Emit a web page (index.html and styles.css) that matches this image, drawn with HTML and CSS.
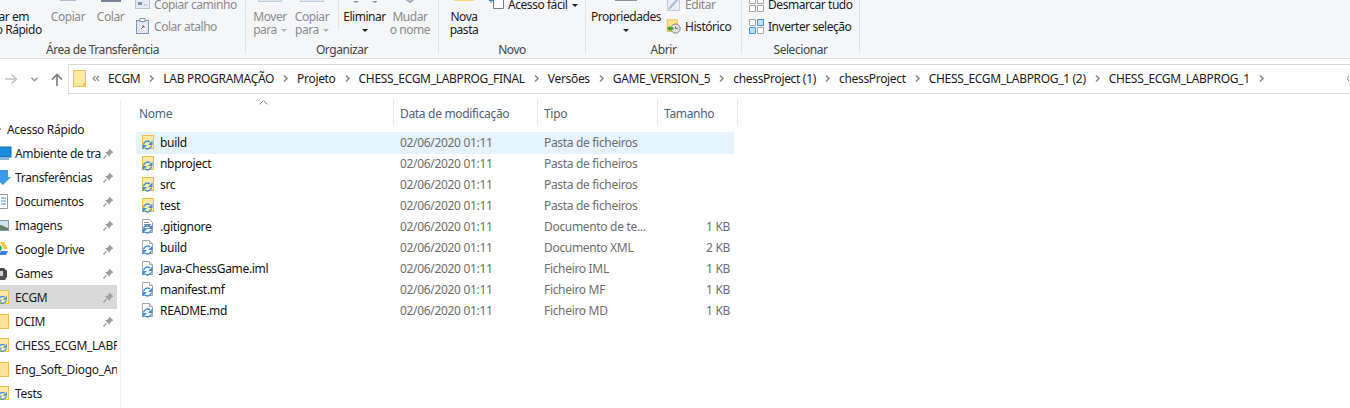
FILE: index.html
```html
<!DOCTYPE html>
<html lang="pt">
<head>
  <meta charset="UTF-8">
  <title>CHESS_ECGM_LABPROG_1</title>
  <link rel="stylesheet" href="styles.css">
</head>
<body>
<svg class="defs" width="0" height="0">
  <symbol id="sync" viewBox="0 0 18 18">
    <g fill="none" stroke="#3a8de0" stroke-width="1.400">
      <path d="M4.500 10.500a4 4 0 0 1 6.500-2.500"/>
      <path d="M12.500 11.500a4 4 0 0 1-6.500 2.500"/>
    </g>
    <path d="M13.500 6.500v4.500h-4.500zM3.500 15.500v-4.500h4.500z" fill="#3a8de0"/>
  </symbol>
  <symbol id="folder" viewBox="0 0 18 18">
    <rect x="3.500" y="1.500" width="11" height="13" fill="#ffe9a3" stroke="#efbc45"/>
    <use href="#sync" width="18" height="18"/>
  </symbol>
  <symbol id="file" viewBox="0 0 18 18">
    <path d="M3.500 1.500h7l3 3v10h-10z" fill="#fff" stroke="#a3a7ab"/>
    <path d="M10.500 1.500v3h3" fill="#eee" stroke="#a3a7ab"/>
    <use href="#sync" width="18" height="18"/>
  </symbol>
  <symbol id="textfile" viewBox="0 0 18 18">
    <path d="M3.500 1.500h7l3 3v10h-10z" fill="#fff" stroke="#a3a7ab"/>
    <path d="M5 4.500h5M5 6.500h7M5 8.500h7M5 10.500h7" stroke="#8d9298"/>
    <use href="#sync" width="18" height="18"/>
  </symbol>
  <symbol id="pin" viewBox="0 0 11 11">
    <path d="M6.500 0.500l4 4-1.500.6-2 2-.2 2L2 4.300l2-.3 2-2z" fill="#a0a0a0"/>
    <path d="M3.500 7L.5 10.500" stroke="#a0a0a0" stroke-width="1.200"/>
  </symbol>
  <symbol id="crumb" viewBox="0 0 9 9">
    <path d="M3 1.500L6 4.500 3 7.500" fill="none" stroke="#858585" stroke-width="1.500"/>
  </symbol>
</svg>

<div class="ribbon">
  <div class="group g-clipboard">
    <div class="group-body">
      <div class="big b-pin"><svg width="24" height="24"></svg><span>Afixar em<br>Acesso Rápido</span></div>
      <div class="big b-copy off">
        <svg width="16" height="24"><rect x="0.500" y="2.500" width="15" height="18" fill="#e4ebf5" stroke="#b4bccb"/></svg>
        <span>Copiar<br>&nbsp;</span>
      </div>
      <div class="big b-paste off">
        <svg width="20" height="24"><rect x="1" y="2" width="18" height="19" fill="#e8edf4" stroke="#77859c" stroke-width="2"/></svg>
        <span>Colar<br>&nbsp;</span>
      </div>
      <div class="small-col">
        <div class="small off">
          <svg width="15" height="12"><rect x="0.500" y="0.500" width="14" height="10" fill="#e6ecf5" stroke="#b9c2d1"/><path d="M3 4l1 3 1-3 1 3 1-3M9 7h.800M11 7h.800" stroke="#7a8699" fill="none"/></svg>
          <span>Copiar caminho</span>
        </div>
        <div class="small off">
          <svg width="15" height="16"><rect x="1.500" y="2.500" width="12" height="13" fill="#dde6f2" stroke="#8497b3"/><rect x="5" y="0.500" width="5" height="3" fill="#fff" stroke="#8497b3"/><path d="M5.500 6.500h5v6h-5z" fill="#fff"/><path d="M6 11l3-3M7 8h2v2" stroke="#51617a" fill="none"/></svg>
          <span>Colar atalho</span>
        </div>
      </div>
    </div>
    <div class="group-label">Área de Transferência</div>
  </div>

  <div class="group g-organize">
    <div class="group-body">
      <div class="big b-move off">
        <svg width="24" height="24"><rect x="0.500" y="4.500" width="23" height="17" fill="#dfe7f3" stroke="#c3cbd8"/></svg>
        <span>Mover<br>para<i class="caret light"></i></span>
      </div>
      <div class="big b-copyto off">
        <svg width="24" height="24"><rect x="0.500" y="4.500" width="23" height="17" fill="#dfe7f3" stroke="#c3cbd8"/></svg>
        <span>Copiar<br>para<i class="caret light"></i></span>
      </div>
      <div class="tool-sep"></div>
      <div class="big b-delete">
        <svg width="24" height="24"><path d="M0 21l3 2 3-2M19 21l3 2 3-2" fill="#8291a8"/></svg>
        <span>Eliminar<br><i class="caret"></i></span>
      </div>
      <div class="big b-rename off">
        <svg width="14" height="24"><path d="M3 19l4 3 4-3" fill="none" stroke="#a3a9b3" stroke-width="2"/></svg>
        <span>Mudar<br>o nome</span>
      </div>
    </div>
    <div class="group-label">Organizar</div>
  </div>

  <div class="group g-new">
    <div class="group-body">
      <div class="big b-newfolder">
        <svg width="20" height="24"><rect x="0" y="12" width="20" height="9" fill="#fbd978"/></svg>
        <span>Nova<br>pasta</span>
      </div>
      <div class="small-col">
        <div class="small b-easy">
          <svg width="15" height="14"><path d="M4.500 0v11.500h10V0" fill="#fff" stroke="#76808c"/><path d="M0 3.500h5M2 1v5" stroke="#2f80d8"/></svg>
          <span>Acesso fácil<i class="caret"></i></span>
        </div>
        <div class="small"></div>
      </div>
    </div>
    <div class="group-label">Novo</div>
  </div>

  <div class="group g-open">
    <div class="group-body">
      <div class="big b-props">
        <svg width="22" height="24"><rect x="0.500" y="3.500" width="21" height="17" fill="#fff" stroke="#8a8f96"/></svg>
        <span>Propriedades<br><i class="caret"></i></span>
      </div>
      <div class="small-col">
        <div class="small off">
          <svg width="15" height="16"><path d="M1.500 1.500h12v13h-12z" fill="#e9eff7" stroke="#c2cad6"/><path d="M3 13L12 3" stroke="#a9b9d0" stroke-width="2"/></svg>
          <span>Editar</span>
        </div>
        <div class="small">
          <svg width="15" height="17" viewBox="0 0 18 17">
            <rect x="1.500" y="0.500" width="12" height="14" fill="#ffe48f" stroke="#e9b93c"/>
            <circle cx="11.500" cy="11" r="5.500" fill="#e3e3e3" stroke="#6e6e6e"/>
            <path d="M11.500 8v3h2.500" stroke="#555" fill="none"/>
            <path d="M1 11l4-3.500v2h4v3H5v2z" fill="#3fa435"/>
          </svg>
          <span>Histórico</span>
        </div>
      </div>
    </div>
    <div class="group-label">Abrir</div>
  </div>

  <div class="group g-select">
    <div class="group-body">
      <div class="small-col">
        <div class="small">
          <svg width="15" height="15"><path d="M.5.500h6v6h-6zM8.500.500h6v6h-6zM.5 8.500h6v6h-6zM8.500 8.500h6v6h-6z" fill="#fff" stroke="#a4a4a4"/></svg>
          <span>Desmarcar tudo</span>
        </div>
        <div class="small">
          <svg width="15" height="15"><path d="M.5.500h6v6h-6zM8.500 8.500h6v6h-6z" fill="#fff" stroke="#a4a4a4"/><path d="M8.500.500h6v6h-6zM.5 8.500h6v6h-6z" fill="#bfe0fa" stroke="#3a93dc"/></svg>
          <span>Inverter seleção</span>
        </div>
      </div>
    </div>
    <div class="group-label">Selecionar</div>
  </div>
</div>

<div class="nav-row">
  <div class="nav-buttons">
    <svg class="nav-forward" width="13" height="12"><path d="M0 6h11M6.500 1.500L11.500 6l-5 4.500" fill="none" stroke="#c4c4c4" stroke-width="1.500"/></svg>
    <svg class="nav-recent" width="7" height="5"><path d="M.5.800l3 3 3-3" fill="none" stroke="#8f8f8f" stroke-width="1.300"/></svg>
    <svg class="nav-up" width="12" height="13"><path d="M6 13V1.500M1 6.500l5-5 5 5" fill="none" stroke="#7b7b7b" stroke-width="1.600"/></svg>
  </div>
  <div class="address">
    <svg class="addr-folder" width="13" height="17"><path d="M.5.500h12v16H.5z" fill="#ffe9a3" stroke="#efc258"/><path d="M10 13h2.500v3.500H10z" fill="#f4c84f"/></svg>
    <svg class="addr-more" width="8" height="7"><path d="M3.500 1L1 3.500 3.500 6M7 1L4.500 3.500 7 6" fill="none" stroke="#8a8a8a" stroke-width="1.200"/></svg>
    <div class="crumbs">
      <span>ECGM</span><svg class="sep"><use href="#crumb"/></svg>
      <span>LAB PROGRAMAÇÃO</span><svg class="sep"><use href="#crumb"/></svg>
      <span>Projeto</span><svg class="sep"><use href="#crumb"/></svg>
      <span>CHESS_ECGM_LABPROG_FINAL</span><svg class="sep"><use href="#crumb"/></svg>
      <span>Versões</span><svg class="sep"><use href="#crumb"/></svg>
      <span>GAME_VERSION_5</span><svg class="sep"><use href="#crumb"/></svg>
      <span>chessProject (1)</span><svg class="sep"><use href="#crumb"/></svg>
      <span>chessProject</span><svg class="sep"><use href="#crumb"/></svg>
      <span>CHESS_ECGM_LABPROG_1 (2)</span><svg class="sep"><use href="#crumb"/></svg>
      <span>CHESS_ECGM_LABPROG_1</span><svg class="sep"><use href="#crumb"/></svg>
    </div>
    <svg class="addr-end" width="2" height="5"><path d="M2 0L0 2.500 2 5" fill="none" stroke="#777"/></svg>
  </div>
</div>

<div class="explorer">
  <div class="sidebar">
    <div class="side-item side-head"><i class="side-arrow"></i><span>Acesso Rápido</span></div>
    <div class="side-item">
      <svg width="16" height="14"><rect x="0" y="1" width="15" height="10" fill="#1a8ce0" stroke="#0d6cb5"/><path d="M2 13h11" stroke="#0d6cb5"/></svg>
      <span>Ambiente de trabalho</span><svg class="pin"><use href="#pin"/></svg>
    </div>
    <div class="side-item">
      <svg width="16" height="15"><path d="M1 0h11v7h3L7 15-2 7h3z" fill="#3a9ae8"/></svg>
      <span>Transferências</span><svg class="pin"><use href="#pin"/></svg>
    </div>
    <div class="side-item">
      <svg width="16" height="15"><path d="M0.500 .5h11v14h-11z" fill="#fff" stroke="#8d99a8"/><path d="M5 4h5M5 7h5M5 10h5" stroke="#3d8dd6"/></svg>
      <span>Documentos</span><svg class="pin"><use href="#pin"/></svg>
    </div>
    <div class="side-item">
      <svg width="16" height="11"><rect x="0.500" y="0.500" width="12" height="10" fill="#cfe3f3" stroke="#8d99a8"/><path d="M1 7l4-2 7 3v2H1z" fill="#5f8064"/></svg>
      <span>Imagens</span><svg class="pin"><use href="#pin"/></svg>
    </div>
    <div class="side-item">
      <svg width="16" height="14"><path d="M4 0h4l4 7H8z" fill="#f7c531"/><path d="M3 1l3 5-3 6-2-3z" fill="#21a464"/><path d="M5 9h7l-2 4H3z" fill="#3f7ee8"/></svg>
      <span>Google Drive</span><svg class="pin"><use href="#pin"/></svg>
    </div>
    <div class="side-item">
      <svg width="16" height="15"><path d="M0 2h8l3 3v6l-2 3H0z" fill="#4c4c4c"/><rect x="2" y="5" width="5" height="5" fill="#cfcfcf"/></svg>
      <span>Games</span><svg class="pin"><use href="#pin"/></svg>
    </div>
    <div class="side-item active">
      <svg width="16" height="17"><rect x="-3.500" y="1.500" width="16" height="13" fill="#ffe9a3" stroke="#efbc45"/><use href="#sync" x="-1" y="1" width="16" height="16"/></svg>
      <span>ECGM</span><svg class="pin"><use href="#pin"/></svg>
    </div>
    <div class="side-item">
      <svg width="16" height="15"><rect x="-3.500" y="0.500" width="16" height="14" fill="#ffe39a" stroke="#eebb45"/></svg>
      <span>DCIM</span><svg class="pin"><use href="#pin"/></svg>
    </div>
    <div class="side-item">
      <svg width="16" height="17"><rect x="-3.500" y="1.500" width="16" height="13" fill="#ffe9a3" stroke="#efbc45"/><use href="#sync" x="-1" y="1" width="16" height="16"/></svg>
      <span>CHESS_ECGM_LABPROG_1</span>
    </div>
    <div class="side-item">
      <svg width="16" height="15"><rect x="-3.500" y="0.500" width="16" height="14" fill="#ffe39a" stroke="#eebb45"/></svg>
      <span>Eng_Soft_Diogo_Andrade</span>
    </div>
    <div class="side-item">
      <svg width="16" height="17"><rect x="-3.500" y="1.500" width="16" height="13" fill="#ffe9a3" stroke="#efbc45"/><use href="#sync" x="-1" y="1" width="16" height="16"/></svg>
      <span>Tests</span>
    </div>
  </div>

  <div class="files">
    <div class="list-head">
      <div class="head-cell head-name">Nome<svg class="sort" width="9" height="5"><path d="M.5 4.500l4-4 4 4" fill="none" stroke="#8a8a8a"/></svg></div>
      <div class="head-cell">Data de modificação</div>
      <div class="head-cell">Tipo</div>
      <div class="head-cell">Tamanho</div>
    </div>
    <div class="row hover">
      <div class="name"><svg><use href="#folder"/></svg>build</div>
      <div class="meta">02/06/2020 01:11</div><div class="meta">Pasta de ficheiros</div><div class="size"></div>
    </div>
    <div class="row">
      <div class="name"><svg><use href="#folder"/></svg>nbproject</div>
      <div class="meta">02/06/2020 01:11</div><div class="meta">Pasta de ficheiros</div><div class="size"></div>
    </div>
    <div class="row">
      <div class="name"><svg><use href="#folder"/></svg>src</div>
      <div class="meta">02/06/2020 01:11</div><div class="meta">Pasta de ficheiros</div><div class="size"></div>
    </div>
    <div class="row">
      <div class="name"><svg><use href="#folder"/></svg>test</div>
      <div class="meta">02/06/2020 01:11</div><div class="meta">Pasta de ficheiros</div><div class="size"></div>
    </div>
    <div class="row">
      <div class="name"><svg><use href="#textfile"/></svg>.gitignore</div>
      <div class="meta">02/06/2020 01:11</div><div class="meta">Documento de te...</div><div class="size">1 KB</div>
    </div>
    <div class="row">
      <div class="name"><svg><use href="#file"/></svg>build</div>
      <div class="meta">02/06/2020 01:11</div><div class="meta">Documento XML</div><div class="size">2 KB</div>
    </div>
    <div class="row">
      <div class="name"><svg><use href="#file"/></svg>Java-ChessGame.iml</div>
      <div class="meta">02/06/2020 01:11</div><div class="meta">Ficheiro IML</div><div class="size">1 KB</div>
    </div>
    <div class="row">
      <div class="name"><svg><use href="#file"/></svg>manifest.mf</div>
      <div class="meta">02/06/2020 01:11</div><div class="meta">Ficheiro MF</div><div class="size">1 KB</div>
    </div>
    <div class="row">
      <div class="name"><svg><use href="#file"/></svg>README.md</div>
      <div class="meta">02/06/2020 01:11</div><div class="meta">Ficheiro MD</div><div class="size">1 KB</div>
    </div>
  </div>
</div>
</body>
</html>
```

FILE: styles.css
```css
html, body {
  margin: 0;
  height: 408px;
  overflow: hidden;
  background: #fff;
}
body {
  font-family: "Noto Sans", "Liberation Sans", sans-serif;
  font-size: 12px;
  letter-spacing: -0.32px;
  color: #1a1a1a;
}
.defs {
  position: absolute;
}

/* ribbon */
.ribbon {
  display: flex;
  height: 58px;
  overflow: hidden;
  background: #f5f6f7;
  border-bottom: 1px solid #dadbdc;
  letter-spacing: -0.45px;
}
.group {
  flex: none;
  display: flex;
  flex-direction: column;
  height: 54px;
  border-right: 1px solid #e2e3e4;
}
/* the window is scrolled, so the first group starts left of the picture */
.g-clipboard { width: 285px; margin-left: -40px; }
.g-organize { width: 192px; }
.g-new { width: 146px; }
.g-open { width: 155px; }
.g-select { width: 117px; }
.group-body {
  flex: 0 0 41px;
  min-height: 0;
  box-sizing: border-box;
  display: flex;
  align-items: flex-end;
  padding-bottom: 5px;
}
.group-label {
  flex: none;
  margin-top: 1px;
  line-height: 16px;
  text-align: center;
  color: #444;
  white-space: nowrap;
}
.big {
  flex: none;
  display: flex;
  flex-direction: column;
  align-items: center;
  line-height: 13px;
  text-align: center;
  white-space: nowrap;
}
.big svg {
  flex: none;
  margin-bottom: 6px;
}
.off {
  color: #8b8b8b;
}
.b-pin { width: 80px; margin-left: 4px; }
.b-copy { width: 34px; margin-left: 7px; }
.b-paste { width: 27px; margin-left: 12px; }
.b-move { width: 32px; margin-left: 8px; }
.b-copyto { width: 34px; margin-left: 9px; }
.tool-sep {
  flex: none;
  width: 1px;
  height: 40px;
  margin: 0 5px 6px 9px;
  background: #e2e3e4;
}
.b-delete { width: 41px; }
.b-rename { width: 38px; margin-left: 6px; }
.b-newfolder { width: 28px; margin-left: 11px; }
.b-props { width: 68px; margin-left: 6px; }
.small-col {
  flex: none;
  margin-bottom: -1px;
}
.g-clipboard .small-col { margin-left: 11px; }
.g-new .small-col { margin-left: 11px; }
.g-open .small-col { margin-left: 6px; }
.g-select .small-col { margin-left: 7px; }
.small {
  display: flex;
  align-items: center;
  height: 22px;
  white-space: nowrap;
}
.small svg {
  flex: none;
  margin-right: 4px;
}
.caret {
  display: inline-block;
  width: 0;
  height: 0;
  border: 3px solid transparent;
  border-top: 3px solid #222;
  border-bottom: 0;
  vertical-align: 2px;
}
.caret.light {
  margin-left: 4px;
  border-top-color: #b5b5b5;
}
.b-easy .caret {
  margin-left: 4px;
}

/* address bar */
.nav-row {
  display: flex;
  padding-top: 5px;
}
.nav-buttons {
  flex: none;
  display: flex;
  align-items: center;
  width: 68px;
}
.nav-forward { margin-left: 5px; }
.nav-recent { margin-left: 13px; }
.nav-up { margin-left: 13px; }
.address {
  flex: 1;
  box-sizing: border-box;
  display: flex;
  align-items: center;
  height: 30px;
  margin-right: -1px;
  padding: 0 0 1px 4px;
  border: 1px solid #d9d9d9;
  white-space: nowrap;
  overflow: hidden;
}
.addr-folder { flex: none; }
.addr-more {
  flex: none;
  margin-left: 6px;
}
.crumbs {
  display: flex;
  align-items: center;
  gap: 7px;
  margin-left: 8px;
  color: #1a1a1a;
}
.sep {
  flex: none;
  width: 9px;
  height: 9px;
}
.addr-end {
  flex: none;
  margin-left: auto;
  margin-right: 1px;
}

/* navigation pane */
.explorer {
  display: flex;
  margin-top: 6px;
}
.sidebar {
  flex: none;
  box-sizing: border-box;
  width: 121px;
  height: 308px;
  padding: 17px 3px 0 0;
  border-right: 1px solid #f0f0f0;
}
.side-item {
  display: flex;
  align-items: center;
  height: 24px;
  white-space: nowrap;
  overflow: hidden;
}
.side-item > svg:first-child {
  flex: none;
  width: 16px;
  margin-left: -4px;
  margin-right: 3px;
}
.side-item span {
  flex: 1;
  min-width: 0;
  overflow: hidden;
}
.side-head {
  padding-left: 7px;
}
.side-arrow {
  position: absolute;
  left: -2px;
  width: 0;
  height: 0;
  border: 3px solid transparent;
  border-left-color: #5a6a7c;
}
.side-item.active {
  background: #d9d9d9;
}
.pin {
  flex: none;
  width: 11px;
  height: 11px;
  margin: 0 3px 0 2px;
}

/* file list */
.files {
  flex: none;
  padding-left: 15px;
}
.list-head {
  display: grid;
  grid-template-columns: 258px 144px 120px 80px;
  margin-bottom: 7px;
}
.head-cell {
  position: relative;
  box-sizing: border-box;
  height: 25px;
  padding-left: 6px;
  line-height: 27px;
  color: #4c607a;
  border-right: 1px solid #e5e5e5;
  white-space: nowrap;
}
.head-name {
  padding-left: 3px;
}
.sort {
  position: absolute;
  left: 123px;
  top: 0;
}
.row {
  display: grid;
  grid-template-columns: 258px 144px 120px 76px;
  align-items: center;
  width: 598px;
  height: 21px;
  white-space: nowrap;
}
.row.hover {
  background: #e5f3ff;
  box-shadow: 0 1px 0 #e5f3ff;
}
.name {
  display: flex;
  align-items: center;
  padding-left: 3px;
  color: #111;
}
.name svg {
  flex: none;
  width: 18px;
  height: 18px;
  margin-right: 3px;
}
.meta {
  padding-left: 6px;
  color: #6d6d6d;
}
.size {
  padding-right: 4px;
  text-align: right;
  color: #6d6d6d;
}
```
